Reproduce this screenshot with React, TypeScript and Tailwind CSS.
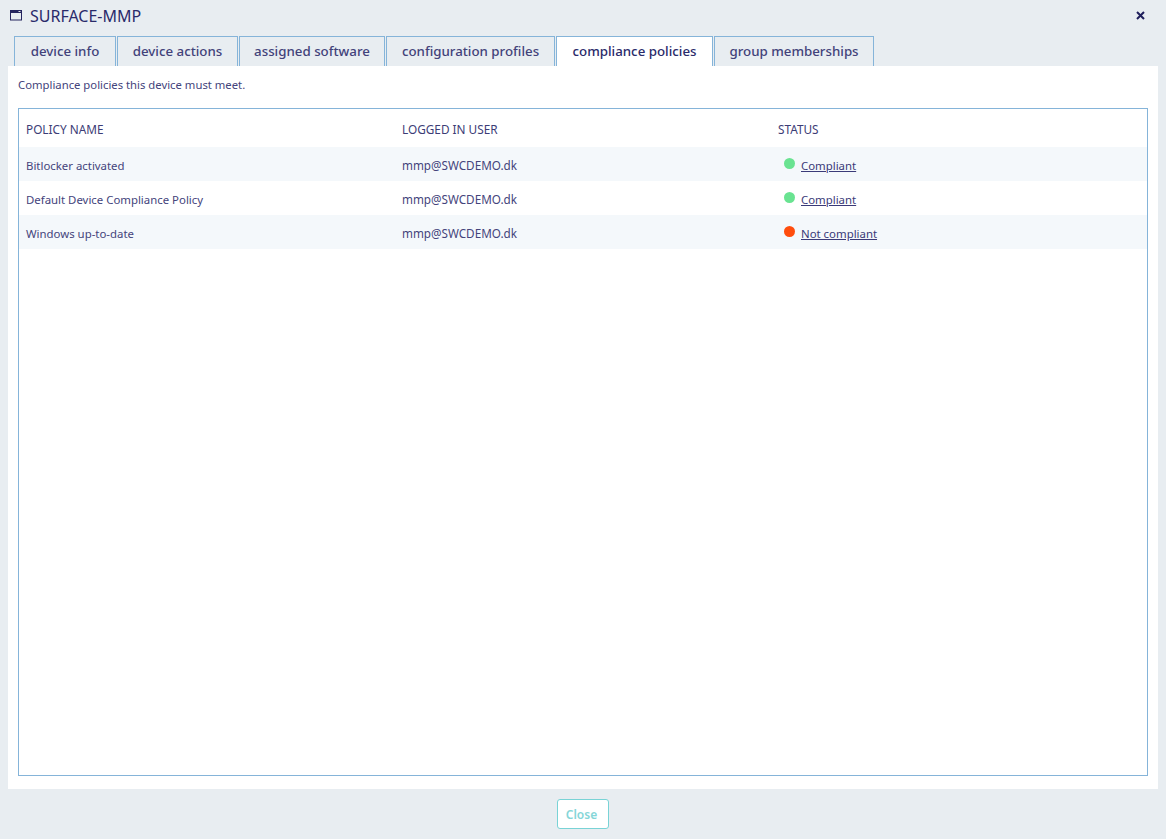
import React from 'react';

const TABS = [
  { label: 'device info', width: 'w-[102px]' },
  { label: 'device actions', width: 'w-[121px]' },
  { label: 'assigned software', width: 'w-[146px]' },
  { label: 'configuration profiles', width: 'w-[169px]' },
  { label: 'compliance policies', width: 'w-[157px]', active: true },
  { label: 'group memberships', width: 'w-[160px]' },
];

const ROWS = [
  { name: 'Bitlocker activated', user: 'mmp@SWCDEMO.dk', status: 'Compliant', ok: true },
  { name: 'Default Device Compliance Policy', user: 'mmp@SWCDEMO.dk', status: 'Compliant', ok: true },
  { name: 'Windows up-to-date', user: 'mmp@SWCDEMO.dk', status: 'Not compliant', ok: false },
];

export default function App() {
  return (
    <div className="w-[1166px] h-[839px] flex flex-col bg-[#e8edf1] text-[#35356f] overflow-hidden font-['Noto_Sans','Open_Sans',sans-serif]">
      {/* title */}
      <div className="h-[36px] flex items-center justify-between pl-[10px] pr-[21px] pb-[6px]">
        <div className="flex items-center gap-[8px]">
          <svg width="12" height="11" viewBox="0 0 12 11" className="text-[#25255f]">
            <rect x="0.5" y="0.5" width="11" height="9.5" fill="none" stroke="currentColor" />
            <rect x="0.5" y="0.5" width="11" height="2.5" fill="currentColor" />
            <rect x="8.5" y="1" width="2" height="1" fill="#e8edf1" />
          </svg>
          <span className="pt-[2px] text-[16px] leading-none text-[#2a2a6a]">SURFACE-MMP</span>
        </div>
        <svg width="9" height="9" viewBox="0 0 9 9" className="text-[#1f1f5c]">
          <path d="M1 1 L8 8 M8 1 L1 8" stroke="currentColor" strokeWidth="2" />
        </svg>
      </div>

      {/* tabs */}
      <div className="h-[30px] flex gap-[1px] pl-[14px]">
        {TABS.map((tab) => (
          <div
            key={tab.label}
            className={`${tab.width} flex items-center justify-center pt-[1px] border border-b-0 border-[#85b4d9] text-[13.3px] font-medium ${tab.active ? 'bg-white text-[#2a2a6a]' : 'text-[#42427a]'}`}
          >
            {tab.label}
          </div>
        ))}
      </div>

      {/* panel */}
      <div className="mx-[8px] h-[723px] bg-white flex flex-col px-[10px] pb-[13px]">
        <p className="h-[42px] pt-[11px] text-[11.3px] leading-[16px] text-[#44447c]">Compliance policies this device must meet.</p>
        <div className="flex-1 border border-[#85b4d9]">
          <div className="h-[38px] grid grid-cols-[376px_376px_1fr] items-center pl-[7px] pt-[4px] text-[11.8px] text-[#3c3c76]">
            <span>POLICY NAME</span>
            <span>LOGGED IN USER</span>
            <span>STATUS</span>
          </div>
          {ROWS.map((row, i) => (
            <div
              key={row.name}
              className={`h-[34px] grid grid-cols-[376px_376px_1fr] items-center pl-[7px] pt-[4px] text-[11.4px] text-[#44447c] ${i % 2 === 0 ? 'bg-[#f4f8fb]' : 'bg-white'}`}
            >
              <span>{row.name}</span>
              <span className="text-[11.7px]">{row.user}</span>
              <div className="flex items-center pl-[6px] gap-[6px]">
                <span className={`w-[11px] h-[11px] rounded-full mb-[5px] ${row.ok ? 'bg-[#69e391]' : 'bg-[#ff4d0d]'}`} />
                <span className="underline text-[#3a3a78]">{row.status}</span>
              </div>
            </div>
          ))}
        </div>
      </div>

      {/* footer */}
      <div className="flex-1 flex justify-center pt-[10px]">
        <button className="w-[52px] h-[30px] pt-[2px] pr-[3px] bg-white border border-[#79d3d6] rounded-[3px] text-[12px] font-semibold text-[#85d6d8]">
          Close
        </button>
      </div>
    </div>
  );
}
